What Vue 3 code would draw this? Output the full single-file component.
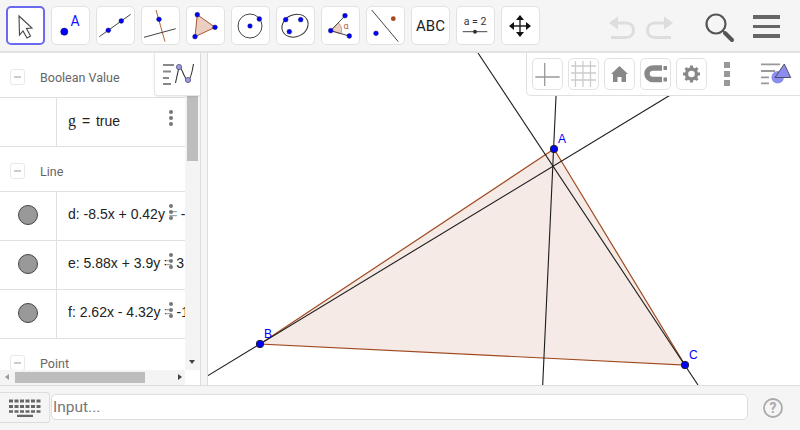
<script setup>
const lines = [
  { id: 'd', text: 'd: -8.5x + 0.42y = -4' },
  { id: 'e', text: 'e: 5.88x + 3.9y = 3' },
  { id: 'f', text: 'f: 2.62x - 4.32y = -1' },
]
</script>

<template>
  <div class="app">
    <header class="toolbar">
      <div class="tools">
        <button class="tool active">
          <svg viewBox="0 0 39 39"><path d="M13 10 26 22 20.500 22.500 24.500 30 21 32 17 25 13.500 29Z" fill="#fff" stroke="#444" stroke-width="1.100" /></svg>
        </button>
        <button class="tool">
          <svg viewBox="0 0 39 39">
            <circle cx="13.300" cy="25.700" r="3.600" fill="#00f" stroke="#114" stroke-width=".5" />
            <text x="19.500" y="19.500" class="tool-a">A</text>
          </svg>
        </button>
        <button class="tool">
          <svg viewBox="0 0 39 39">
            <path d="M3.300 30.700 34.700 8.300" stroke="#444" />
            <circle cx="12.300" cy="24.300" r="2.400" class="pt" /><circle cx="25.300" cy="15" r="2.400" class="pt" />
          </svg>
        </button>
        <button class="tool">
          <svg viewBox="0 0 39 39">
            <path d="M15 4 24 35.700" stroke="#b5623a" />
            <path d="M3 31.300 34.700 22.700" stroke="#444" />
            <circle cx="18" cy="13.300" r="2.400" class="pt" />
          </svg>
        </button>
        <button class="tool">
          <svg viewBox="0 0 39 39">
            <path d="M11.300 8.700 29 21.300 9 30.700Z" fill="#eccfc3" stroke="#a8552e" />
            <circle cx="11.300" cy="8.700" r="2.400" class="pt" /><circle cx="29" cy="21.300" r="2.400" class="pt" /><circle cx="9" cy="30.700" r="2.400" class="pt" />
          </svg>
        </button>
        <button class="tool">
          <svg viewBox="0 0 39 39">
            <circle cx="19" cy="20" r="12" fill="none" stroke="#444" />
            <circle cx="19" cy="20" r="2.300" class="pt" /><circle cx="28.300" cy="13" r="2.400" class="pt" />
          </svg>
        </button>
        <button class="tool">
          <svg viewBox="0 0 39 39">
            <ellipse cx="19" cy="19.700" rx="13.500" ry="11" transform="rotate(-25 19 19.700)" fill="none" stroke="#333" />
            <circle cx="9.700" cy="13.700" r="2.400" class="pt" /><circle cx="24.700" cy="13.700" r="2.400" class="pt" /><circle cx="13.300" cy="25.700" r="2.400" class="pt" />
          </svg>
        </button>
        <button class="tool">
          <svg viewBox="0 0 39 39">
            <path d="M9.700 24.700 17.500 16.800A11 11 0 0 1 20 27.800Z" fill="#eccfc3" stroke="#c98a6c" stroke-width=".8" />
            <path d="M9.700 24.700 24 9.700M9.700 24.700 28.300 30" stroke="#444" />
            <circle cx="9.700" cy="24.700" r="2.400" class="pt" /><circle cx="24" cy="9.700" r="2.400" class="pt" /><circle cx="28.300" cy="30" r="2.400" class="pt" />
            <text x="22.500" y="23" class="tool-alpha">α</text>
          </svg>
        </button>
        <button class="tool">
          <svg viewBox="0 0 39 39">
            <path d="M5.700 4 32.300 35.700" stroke="#444" />
            <circle cx="27.300" cy="12.700" r="2.400" fill="#a8481c" />
            <circle cx="10" cy="27.300" r="2.400" class="pt" />
          </svg>
        </button>
        <button class="tool abc">ABC</button>
        <button class="tool">
          <svg viewBox="0 0 39 39">
            <text x="19" y="19" class="tool-slider">a = 2</text>
            <path d="M6.700 25.700H31.300" stroke="#444" />
            <circle cx="19" cy="25.700" r="2" fill="#333" />
          </svg>
        </button>
        <button class="tool">
          <svg viewBox="0 0 39 39">
            <path d="M19 12V28M11 20H27" stroke="#222" stroke-width="1.400" />
            <path d="M19 9 23 14H15ZM19 31 23 26H15ZM8 20 13 16V24ZM30 20 25 16V24Z" fill="#111" />
          </svg>
        </button>
      </div>
      <div class="actions">
        <svg class="undo" viewBox="0 0 66 24" width="66" height="24">
          <path d="M1 7 10 .5V13.500Z" fill="#ddd" /><path d="M9 7H18C28 7 28 21.500 18 21.500H3" class="hist" />
          <path d="M65 7 56 .5V13.500Z" fill="#ddd" /><path d="M57 7H47C37 7 37 21.500 47 21.500H63" class="hist" />
        </svg>
        <svg class="search" viewBox="0 0 32 32">
          <circle cx="12" cy="12" r="9.500" fill="none" stroke="#555" stroke-width="2.200" />
          <path d="M19 19 28 28" stroke="#555" stroke-width="1.500" />
          <path d="M21 21 28 28" stroke="#555" stroke-width="4" stroke-linecap="round" />
        </svg>
        <div class="burger"><i /><i /><i /></div>
      </div>
    </header>

    <div class="middle">
      <aside class="algebra">
        <div class="alg-main">
          <div class="alg-list">
            <div class="group-head"><span class="minus" /><span>Boolean Value</span></div>
            <div class="row">
              <div class="marble-cell" />
              <div class="formula bool"><span class="var">g</span> = true</div>
              <span class="more"><i /><i /><i /></span>
            </div>
            <div class="group-head"><span class="minus" /><span>Line</span></div>
            <div class="row" v-for="l in lines" :key="l.id">
              <div class="marble-cell"><span class="marble" /></div>
              <div class="formula">{{ l.text }}</div>
              <span class="more over"><i /><i /><i /></span>
            </div>
            <div class="group-head"><span class="minus" /><span>Point</span></div>
          </div>
          <div class="vscroll">
            <div class="vthumb" />
            <span class="arrow-down" />
          </div>
        </div>
        <div class="hscroll">
          <div class="htrack">
            <span class="arrow-left" />
            <div class="hthumb" />
            <span class="arrow-right" />
          </div>
          <div class="corner" />
        </div>
        <div class="alg-toggle">
          <svg viewBox="0 0 45 42" width="45" height="42">
            <path d="M8 12H19M8 18.500H16M8 25H14M8 31H16" stroke="#888" stroke-width="2" />
            <path d="M20.500 30 24 14C27 13 29 27 33 27C35 27 37 20 38.500 11" fill="none" stroke="#333" stroke-width="1.100" />
            <circle cx="24" cy="14" r="2.600" fill="#9a9af0" stroke="#445" stroke-width=".7" />
            <circle cx="33" cy="27" r="2.600" fill="#9a9af0" stroke="#445" stroke-width=".7" />
          </svg>
        </div>
      </aside>

      <div class="divider" />

      <main class="graphics">
        <svg class="plot" viewBox="208 53 592 332" width="592" height="332">
          <polygon points="554,149 260,344 685,365" fill="#993300" fill-opacity=".1" stroke="#a0491f" stroke-width="1.200" />
          <path d="M208 375.600 700 77" class="line" />
          <path d="M558 53 542.700 385" class="line" />
          <path d="M478 53 698 385" class="line" />
          <circle cx="554" cy="149" r="3.700" class="point" />
          <circle cx="260" cy="344" r="3.700" class="point" />
          <circle cx="685" cy="365" r="3.700" class="point" />
          <text x="558" y="143" class="label">A</text>
          <text x="264" y="338" class="label">B</text>
          <text x="689" y="359" class="label">C</text>
        </svg>
        <div class="stylebar">
          <span class="sbtn">
            <svg viewBox="0 0 31 32"><path d="M12.700 5V28M3.300 19H27.700" stroke="#999" stroke-width="1.300" /></svg>
          </span>
          <span class="sbtn">
            <svg viewBox="0 0 31 32"><path d="M7.500 3V29M15 3V29M22.500 3V29M3 8H28M3 15H28M3 22H28" stroke="#ccc" stroke-width="1.300" /></svg>
          </span>
          <span class="sbtn">
            <svg viewBox="0 0 31 32"><path d="M15.500 8 24 16H22V24H17.500V19H13.500V24H9V16H7Z" fill="#888" /></svg>
          </span>
          <span class="sbtn">
            <svg viewBox="0 0 31 32">
              <path d="M22 10H13C5 10 5 21.500 13 21.500H22" fill="none" stroke="#888" stroke-width="5.500" />
              <path d="M23.500 10H27M23.500 21.500H27" stroke="#888" stroke-width="4" />
            </svg>
          </span>
          <span class="sbtn">
            <svg viewBox="0 0 31 32">
              <circle cx="15.500" cy="16" r="5" fill="none" stroke="#888" stroke-width="3.400" />
              <path d="M15.500 7.500V10.500M15.500 21.500V24.500M7 16H10M21 16H24M9.500 10 11.600 12.100M19.400 19.900 21.500 22M21.500 10 19.400 12.100M11.600 19.900 9.500 22" stroke="#888" stroke-width="3" />
            </svg>
          </span>
          <span class="sdots"><i /><i /><i /></span>
          <svg class="sview" viewBox="0 0 31 23" width="31" height="23">
            <path d="M0 1.300H19M0 8H14M0 14.300H8M0 20.300H8" stroke="#999" stroke-width="1.800" />
            <circle cx="16.700" cy="14.300" r="6.200" fill="#8d8df0" />
            <path d="M23.300 1 14 14.500H29.700Z" fill="#8d8df0" stroke="#445" stroke-width=".9" />
          </svg>
        </div>
      </main>
    </div>

    <footer class="inputbar">
      <button class="keys">
        <svg viewBox="0 0 32 18" width="32" height="18">
          <path d="M0 2H32M0 7.500H32" stroke="#666" stroke-width="3" stroke-dasharray="4 1.500" />
          <path d="M0 12.500H32" stroke="#666" stroke-width="2.500" stroke-dasharray="4 1.500" />
          <path d="M8 17H24" stroke="#666" stroke-width="2.500" />
        </svg>
      </button>
      <div class="input">Input...</div>
      <svg class="help" viewBox="0 0 20 20" width="20" height="20">
        <circle cx="10" cy="10" r="9" fill="none" stroke="#aaa" stroke-width="1.800" />
        <text x="10" y="14.500" class="help-q">?</text>
      </svg>
    </footer>
  </div>
</template>

<style>
html, body { margin: 0; background: #fff; overflow: hidden; }
</style>

<style scoped>
* { box-sizing: border-box; }
.app { width: 800px; height: 430px; display: flex; flex-direction: column; font-family: Roboto, sans-serif; overflow: hidden; }

.toolbar { height: 53px; flex: none; display: flex; justify-content: space-between; background: #f5f5f5; border-bottom: 2px solid #e2e2e2; padding: 6px 0 0 6px; }
.tools { display: flex; gap: 6px; align-items: flex-start; }
.tool { width: 39px; height: 39px; padding: 0; background: #fff; border: 1px solid #e2e2e2; border-radius: 5px; position: relative; font-family: inherit; }
.tool svg { position: absolute; left: -1px; top: -1px; width: 39px; height: 39px; }
.tool.active { border: 2px solid #6a6af0; }
.tool.active svg { left: -2px; top: -2px; }
.tool path:not([fill]) { fill: none; }
.abc { font-size: 15px; color: #222; }
.pt { fill: #00f; stroke: #224; stroke-width: .4; }
.tool-a { font-size: 14px; fill: #11f; font-family: Roboto, sans-serif; }
.tool-alpha { font-size: 9px; fill: #b5623a; font-family: Roboto, sans-serif; }
.tool-slider { font-size: 10.5px; fill: #333; text-anchor: middle; font-family: Roboto, sans-serif; }

.actions { display: flex; align-items: flex-start; }
.undo { margin: 10px 0 0 0; }
.hist { fill: none; stroke: #ddd; stroke-width: 3; }
.search { width: 32px; height: 32px; margin: 6px 0 0 30px; }
.burger { width: 27px; margin: 9px 20px 0 17px; display: flex; flex-direction: column; gap: 6px; }
.burger i { display: block; height: 3.500px; background: #666; }

.middle { flex: 1; display: flex; min-height: 0; }

.algebra { width: 200px; flex: none; position: relative; display: flex; flex-direction: column; }
.alg-main { flex: 1; display: flex; min-height: 0; }
.alg-list { flex: 1; min-width: 0; overflow: hidden; }
.group-head { height: 44px; display: flex; align-items: center; padding: 4px 0 0 10px; gap: 15px; font-size: 12.500px; color: #666; }
.minus { width: 15px; height: 16px; flex: none; border: 1px solid #e8e8e8; border-radius: 3px; position: relative; }
.minus::after { content: ""; position: absolute; left: 3px; right: 3px; top: 6px; height: 2px; background: #ccc; }
.row { height: 49px; display: flex; position: relative; border-top: 1px solid #e0e0e0; overflow: hidden; }
.row:has(+ .group-head) { height: 50px; border-bottom: 1px solid #e0e0e0; }
.marble-cell { width: 57px; flex: none; display: flex; align-items: center; justify-content: center; padding-bottom: 3px; border-right: 1px solid #e0e0e0; }
.marble { width: 20px; height: 20px; border-radius: 50%; background: #999; border: 1px solid #444; }
.formula { flex: 1; padding-left: 11px; font-size: 14px; line-height: 45px; white-space: nowrap; color: #222; font-family: "Liberation Sans", sans-serif; overflow: hidden; }
.formula.bool { line-height: 46px; word-spacing: 2px; }
.var { font-family: "Liberation Serif", serif; font-size: 16px; }
.more { position: absolute; right: 9px; top: 12px; display: flex; flex-direction: column; gap: 2px; padding: 0 3px; }
.more.over { top: 12px; background: rgba(255, 255, 255, .6); }
.more i { width: 4px; height: 4px; border-radius: 50%; background: #777; }

.vscroll { width: 15px; flex: none; background: #f4f4f4; padding: 0 2px; position: relative; }
.vthumb { height: 108px; background: #bdbdbd; }
.arrow-down { position: absolute; left: 4px; bottom: 6px; border: 3.500px solid transparent; border-top: 4px solid #444; border-bottom: 0; }
.hscroll { height: 15px; flex: none; display: flex; }
.htrack { flex: 1; background: #f4f4f4; padding: 2px 0 2px 15px; position: relative; }
.hthumb { width: 130px; height: 11px; background: #bdbdbd; }
.corner { width: 15px; background: #fff; }
.arrow-left { position: absolute; left: 5px; top: 4px; border: 3.500px solid transparent; border-right: 4px solid #999; border-left: 0; }
.arrow-right { position: absolute; right: 3px; top: 4px; border: 3.500px solid transparent; border-left: 4px solid #444; border-right: 0; }
.alg-toggle { position: absolute; right: 0; top: 0; width: 46px; height: 43px; background: #fff; border: 1px solid #e6e6e6; border-width: 0 0 1px 1px; border-bottom-left-radius: 4px; box-shadow: 0 1px 2px rgba(0, 0, 0, .08); }

.divider { width: 8px; flex: none; background: #f5f5f5; border-left: 1px solid #ddd; border-right: 1px solid #ddd; }

.graphics { flex: 1; position: relative; overflow: hidden; background: #fff; }
.plot { display: block; }
.line { stroke: #1c1c1c; stroke-width: 1.100; fill: none; }
.point { fill: #00f; stroke: #223; stroke-width: 1; }
.label { fill: #00f; font-size: 12px; font-family: "Liberation Sans", sans-serif; }
.stylebar { position: absolute; right: 0; top: 0; width: 274px; height: 43px; background: #fff; border-left: 1px solid #e0e0e0; border-bottom: 1px solid #e0e0e0; border-bottom-left-radius: 5px; display: flex; gap: 5px; padding: 5px 0 0 5px; }
.sbtn { width: 31px; height: 32px; border: 1px solid #e2e2e2; border-radius: 5px; position: relative; flex: none; }
.sbtn svg { position: absolute; left: -1px; top: -1px; width: 31px; height: 32px; }
.sdots { display: flex; flex-direction: column; gap: 3px; margin: 4px 0 0 12px; }
.sdots i { width: 6px; height: 6px; background: #999; }
.sview { margin: 5px 0 0 26px; }

.inputbar { height: 45px; flex: none; display: flex; align-items: flex-start; background: #f5f5f5; border-top: 1px solid #ddd; padding-top: 6px; }
.keys { width: 50px; height: 31px; padding: 0; background: #f5f5f5; border: 1px solid #ddd; border-left: 0; border-radius: 0 3px 3px 0; display: flex; align-items: center; justify-content: center; }
.input { width: 697px; height: 26px; margin: 2px 0 0 1px; background: #fff; border: 1px solid #ddd; border-radius: 5px; padding-left: 1px; font-size: 15.500px; line-height: 24px; color: #777; }
.help { margin: 6px 0 0 15px; }
.help-q { font-size: 14px; font-weight: 700; fill: #aaa; text-anchor: middle; font-family: Roboto, sans-serif; }
</style>
